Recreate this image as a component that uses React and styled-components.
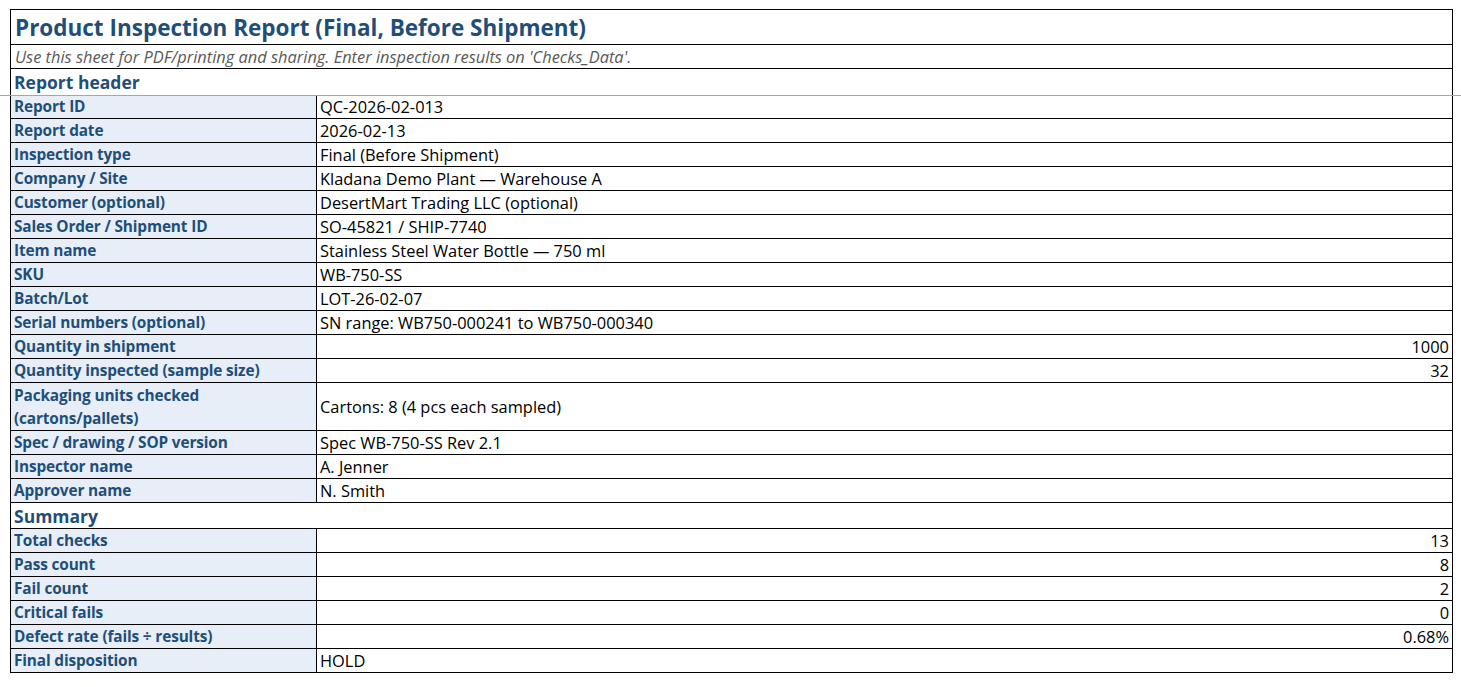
import React from 'react';
import styled, { createGlobalStyle } from 'styled-components';

const GlobalStyle = createGlobalStyle`
  html, body {
    margin: 0;
    padding: 0;
    background: #ffffff;
  }
  body {
    font-family: "Open Sans", "Liberation Sans", Arial, sans-serif;
  }
`;

// Whole printable page area
const Page = styled.div`
  position: relative;
  width: 1461px;
  height: 687px;
  padding: 9px 0 0 10px;
  box-sizing: border-box;
  overflow: hidden;
`;

// Page-break line Excel draws across the sheet
const PageBreak = styled.div`
  position: absolute;
  left: 0;
  right: 0;
  top: ${({ $top }) => $top}px;
  height: 1px;
  background: #a6a6a6;
  pointer-events: none;
`;

const Sheet = styled.div`
  width: 1441px;
  border: 1px solid #000;
  border-bottom: none;
  display: flex;
  flex-direction: column;
`;

const TitleRow = styled.div`
  height: 34px;
  border-bottom: 1px solid #000;
  display: flex;
  align-items: center;
  padding: 0 4px;
  font-size: 22.5px;
  font-weight: 700;
  color: #1f4e79;
  white-space: nowrap;
`;

const NoteRow = styled.div`
  height: 23px;
  border-bottom: 1px solid #000;
  display: flex;
  align-items: center;
  padding: 0 4px;
  font-size: 16.4px;
  line-height: 23px;
  font-style: italic;
  color: #595959;
  white-space: nowrap;
`;

const SectionRow = styled.div`
  height: ${({ $h }) => $h}px;
  border-bottom: ${({ $line }) => ($line ? '1px solid #000' : 'none')};
  display: flex;
  align-items: center;
  padding: 0 3px;
  font-size: 17.5px;
  line-height: 24px;
  font-weight: 700;
  color: #1f4e79;
`;

const Row = styled.div`
  display: grid;
  grid-template-columns: 306px 1fr;
  height: ${({ $tall }) => ($tall ? 47 : 23)}px;
  border-bottom: 1px solid #000;
  overflow: hidden;
`;

const Label = styled.div`
  background: #e7eef7;
  border-right: 1px solid #000;
  padding: 0 3px;
  display: flex;
  align-items: center;
  font-size: 15.4px;
  font-weight: 700;
  letter-spacing: -0.15px;
  color: #1f4e79;
  line-height: 23px;
  min-height: 0;
`;

const Value = styled.div`
  padding: 0 3px;
  display: flex;
  align-items: center;
  justify-content: ${({ $num }) => ($num ? 'flex-end' : 'flex-start')};
  font-size: 16.4px;
  line-height: 23px;
  color: #000;
  white-space: nowrap;
  min-height: 0;
`;

const header = [
  ['Report ID', 'QC-2026-02-013'],
  ['Report date', '2026-02-13'],
  ['Inspection type', 'Final (Before Shipment)'],
  ['Company / Site', 'Kladana Demo Plant — Warehouse A'],
  ['Customer (optional)', 'DesertMart Trading LLC (optional)'],
  ['Sales Order / Shipment ID', 'SO-45821 / SHIP-7740'],
  ['Item name', 'Stainless Steel Water Bottle — 750 ml'],
  ['SKU', 'WB-750-SS'],
  ['Batch/Lot', 'LOT-26-02-07'],
  ['Serial numbers (optional)', 'SN range: WB750-000241 to WB750-000340'],
  ['Quantity in shipment', '1000', 'num'],
  ['Quantity inspected (sample size)', '32', 'num'],
  ['Packaging units checked (cartons/pallets)', 'Cartons: 8 (4 pcs each sampled)', 'tall'],
  ['Spec / drawing / SOP version', 'Spec WB-750-SS Rev 2.1'],
  ['Inspector name', 'A. Jenner'],
  ['Approver name', 'N. Smith'],
];

const summary = [
  ['Total checks', '13', 'num'],
  ['Pass count', '8', 'num'],
  ['Fail count', '2', 'num'],
  ['Critical fails', '0', 'num'],
  ['Defect rate (fails ÷ results)', '0.68%', 'num'],
  ['Final disposition', 'HOLD'],
];

const renderRows = (rows) =>
  rows.map(([label, value, kind]) => (
    <Row key={label} $tall={kind === 'tall'}>
      <Label>{label}</Label>
      <Value $num={kind === 'num'}>{value}</Value>
    </Row>
  ));

const App = () => {
  return (
    <Page>
      <GlobalStyle />
      <Sheet>
        <TitleRow>Product Inspection Report (Final, Before Shipment)</TitleRow>
        <NoteRow>
          Use this sheet for PDF/printing and sharing. Enter inspection results on 'Checks_Data'.
        </NoteRow>
        <SectionRow $h={26}>Report header</SectionRow>
        {renderRows(header)}
        <SectionRow $h={25} $line>Summary</SectionRow>
        {renderRows(summary)}
      </Sheet>
      <PageBreak $top={95} />
    </Page>
  );
};

export default App;
